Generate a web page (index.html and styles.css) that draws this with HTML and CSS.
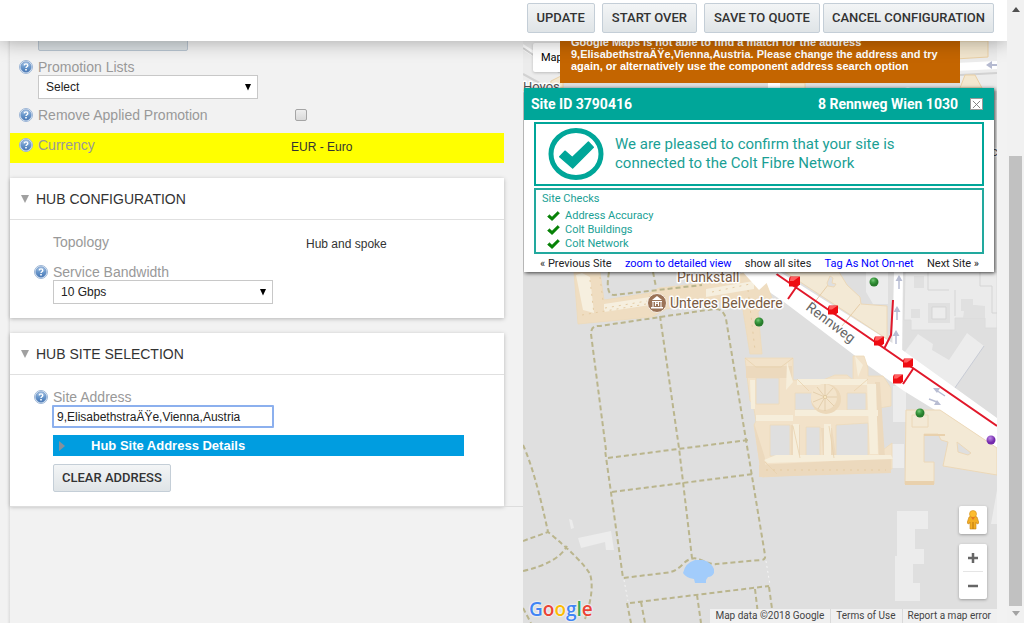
FILE: index.html
```
<!DOCTYPE html>
<html lang="en">
<head>
<meta charset="utf-8">
<title>Configuration</title>
<link rel="stylesheet" href="styles.css">
</head>
<body>
<svg class="defs" aria-hidden="true">
  <defs>
    <linearGradient id="helpFill" x1="0" y1="0" x2="0" y2="1"><stop offset="0" stop-color="#a9c6e6"/><stop offset=".5" stop-color="#6a98cc"/><stop offset="1" stop-color="#4676b4"/></linearGradient>
    <symbol id="help" viewBox="0 0 14 14">
      <circle cx="7" cy="7" r="6.5" fill="#e3edf8" stroke="#9db6d6"/>
      <circle cx="7" cy="7" r="5.2" fill="url(#helpFill)" stroke="#5f88bd" stroke-width=".6"/>
      <path d="M5.200 5.400c.1-2 3.600-2 3.600 0 0 1.300-1.800 1.300-1.800 2.600" fill="none" stroke="#fff" stroke-width="1.400"/>
      <rect x="6.2" y="9" width="1.6" height="1.5" fill="#fff"/>
    </symbol>
    <symbol id="tick" viewBox="0 0 100 80"><path d="M2 45 17 29 38 47 84 3 98 18 39 77Z" fill="currentColor" stroke="currentColor" stroke-width="4" stroke-linejoin="round"/></symbol>
  </defs>
</svg>
<div class="app">
  <div class="page">
    <header class="toolbar">
      <button class="btn spaced">UPDATE</button>
      <button class="btn spaced">START OVER</button>
      <button class="btn">SAVE TO QUOTE</button>
      <button class="btn">CANCEL CONFIGURATION</button>
    </header>
    <main class="content">
      <form class="form">
        <section class="general">
          <button class="btn check" type="button" disabled>CHECK CONNECTIVITY</button>
          <div class="row"><svg class="help"><use href="#help"/></svg><label for="promo">Promotion Lists</label></div>
          <div class="select"><select id="promo"><option>Select</option></select><svg viewBox="0 0 6 7"><path d="M0 0h6L3 6.5z"/></svg></div>
          <div class="row remove"><svg class="help"><use href="#help"/></svg><label for="remove">Remove Applied Promotion</label><input id="remove" type="checkbox"></div>
          <div class="row currency"><svg class="help"><use href="#help"/></svg><span>Currency</span><span class="value">EUR - Euro</span></div>
        </section>
        <section class="card">
          <h2><svg class="fold" viewBox="0 0 8 8"><path d="M0 0h8L4 8z"/></svg>HUB CONFIGURATION</h2>
          <div class="card-body">
            <div class="row topology"><span class="blank"></span><span>Topology</span><span class="value">Hub and spoke</span></div>
            <div class="row"><svg class="help"><use href="#help"/></svg><label for="band">Service Bandwidth</label></div>
            <div class="select"><select id="band"><option>10 Gbps</option></select><svg viewBox="0 0 6 7"><path d="M0 0h6L3 6.5z"/></svg></div>
          </div>
        </section>
        <section class="card">
          <h2><svg class="fold" viewBox="0 0 8 8"><path d="M0 0h8L4 8z"/></svg>HUB SITE SELECTION</h2>
          <div class="card-body">
            <div class="row"><svg class="help"><use href="#help"/></svg><label for="addr">Site Address</label></div>
            <input class="address" id="addr" type="text" value="9,ElisabethstraÄŸe,Vienna,Austria" autofocus>
            <button class="details" type="button"><svg viewBox="0 0 6 10"><path d="M0 0 6 5 0 10z"/></svg>Hub Site Address Details</button>
            <button class="btn clear" type="button">CLEAR ADDRESS</button>
          </div>
        </section>
        <hr>
      </form>
      <section class="map">
        <svg class="canvas" viewBox="523 41 474 582" preserveAspectRatio="xMinYMin slice">
          <defs>
            <radialGradient id="green" cx=".4" cy=".3"><stop offset="0" stop-color="#7cc77c"/><stop offset=".5" stop-color="#3f9f43"/><stop offset="1" stop-color="#287c2c"/></radialGradient>
            <radialGradient id="violet" cx=".4" cy=".3"><stop offset="0" stop-color="#bd8ae6"/><stop offset="1" stop-color="#7429ad"/></radialGradient>
            <symbol id="node" viewBox="0 0 10 9"><path d="M1 0H10V7L8 9H0V2Z" fill="#ee0c12"/><path d="M1.5 .5H9L4 4 .8 4z" fill="#ff6060"/></symbol>
          </defs>
          <path fill="#dfdfdf" d="M523 41h474v582H523z"/>
          <!-- streets and blocks above the info panel -->
          <path fill="#ececec" d="M523 41h37v50h-37zM960 41h37v50h-37zM990 100h7v220h-7z"/>
          <path fill="#fff" d="M523 44 560 67v7L523 50z"/>
          <path stroke="#d2d2d2" stroke-width="2" fill="none" d="M523 48 560 73M523 74 545 86M960 75 997 73"/>
          <path fill="#f3e7cf" stroke="#ead0a5" d="M955 41h33v16l-33 2zM551 81l12-6v13h-13zM775 83h30v6h-30zM965 75h10l7 13h-22z"/>
          <path fill="#fff" d="M955 63 997 61V69L955 71z"/>
          <g stroke="#b5bad0" stroke-width="2" fill="#b5bad0"><path d="M990 65h7"/><path stroke="none" d="M986 65l6-4v8z"/></g>
          <text class="place plain" x="523" y="91">Hoyos</text>
          <text class="place plain" x="904" y="98">St</text>
          <text class="place plain" x="991" y="156">c</text>
          <path fill="#fff" d="M768 41h12v47h-12z"/>

          <!-- blocks east of the avenue -->
          <path fill="#ebebeb" stroke="#dcdcdc" d="M905 272h92v56h-12v-10h-30v12h-44v-10h-7z"/>
          <g fill="#ececec">
            <path d="M901 357 918 334 933 344 932 350 949 360 967 333 984 346 952 392z"/>
            <path d="M866 272h22v32h-15l-7-12z"/>
            <path d="M893 386h13v36h-13zM892 444h12v24h-12zM897 511h31v18h-13v20h9v15h-11v19h7v18h-25v-45h2zM578 538l33-7 3 19h-8l-1-8-24 6zM569 519l3 1 2 8-3 1zM997 490v34h-6z"/>
          </g>
          <path d="M984 346 952 392" stroke="#c8ccd6" fill="none"/>
          <g fill="#e0e0e0"><path d="M928 303h22v20h-22zM911 309h9v9h-9zM961 299h12v12h-12zM914 276h10v12h-10zM965 304l20 2v12h-22z"/></g>
          <path fill="#ececec" stroke="#d5d5d5" d="M932 307h14v12h-14z"/>
          <path fill="none" stroke="#d5d5d5" d="M980 272v14h12v27h5M949 290h-21v-18M955 316v-26"/>

          <!-- roads -->
          <path fill="#fff" d="M894 272h9l-1 92-10-4z"/>
          <path fill="#fff" d="M740 272H780L894 344 997 418V448L904 391 866 364 784 302z"/>

          <!-- palace and street-side buildings -->
          <g fill="#f3e9d5" stroke="#ecd8b8">
            <path d="M785 272h54l8 13 13 12 1 7 26 2v33z"/>
            <path d="M906 410h34l57 38v27l-54-9 5-24-7-2-3-6h-14v28h10v22h-29z"/>
            <path d="M912 415h16v12h-16z"/><path fill="#dfdfdf" d="M957 442l14 11-3 2-10-3z"/>
          </g>
          <path d="M814 303 828 285M842 326l18-22" stroke="#e6cda8" fill="none"/>
          <path d="M827 283l3-7 3 2-1 5 4 1-2 3-6-1z" fill="#dfdfdf" stroke="#ecd8b8"/>
          <path fill="#e9d1ad" d="M905 481h29v4h-29zM924 434h21v2h-21z"/>
          <g fill="#efddc1" stroke="#eddaba" stroke-width=".8">
            <path d="M574 272h26l4 28 45-7 10-5 46-5 34-8 6-3h27l-7 8 7 18-14 14 4 42h-12l-8-50-16-3-60 8-14 8-74 7z"/>
            <path fill="#f6efdf" stroke="none" d="M576 275l6-2 8 4 4 36-11-3zM604 304l46-7v8l-46 7zM706 289l48-8v8l-48 8z"/>
            <path fill="#f2e2c9" fill-rule="evenodd" d="M745 358h48v22h30l12-5h12l6 5V356h11l4 12v8h15l8 12 0 18-12 2 4 42 9-7v26L762 477 754 425l2-4-3-18-3-2zM756 378v26h23V378zM795 393h20v17h-20zM847 393h19v17h-19zM770 425v31h20V425zM806 427v31h14V427zM836 425v31h32V423z"/>
            <path fill="#ecd9bd" stroke="none" d="M754 423l11 35v18h-4zM759 465l132-7v15l-132 4zM791 425h9v32h-9zM875 382l5 0 5 76h-6zM821 428l11 0 4 28h-13zM746 366h46v12h-46z"/>
            <path fill="#f6eedb" stroke="none" d="M756 415h37v6h-37zM797 379h70v6h-70zM795 410h83v6h-83zM764 460l12-5h115l2 4-125 4zM867 384h9l2 70h-8zM793 424h6v33h-6zM824 424h7v32h-7zM750 380h5v29h-4zM787 362l6 20-7 8zM855 356l8 9-5 12z"/>
            <path fill="none" stroke="#e8d2ad" d="M745 358l11 9h25l12-9M765 462l12 12M800 458l-7-32M834 458l-5-32M797 379l12 12M868 379l-14 12"/>
          </g>
          <circle cx="826" cy="399" r="15" fill="#ecd8b9"/><circle cx="824" cy="397" r="13" fill="#f3e4cb"/>
          <path stroke="#dcc5a0" stroke-width=".7" fill="none" d="M825 397l-12-5M825 397l-12 5M825 397l-7 12M825 397l0 14M825 397l9 9M825 397l12 0M825 397l8-9M825 397v-13M825 397l-8-10"/>
          <circle cx="825" cy="397" r="1.500" fill="#fff0cc" stroke="#d4b98d" stroke-width=".6"/>
          <path fill="none" stroke="#e4cba3" stroke-dasharray="2 5" d="M766 470h120M582 315l70-12M605 308l42-7M712 292l38-8M748 290l7 60M590 280l4 34M600 277l3 24"/>

          <!-- garden paths -->
          <g class="paths">
            <path d="M609 272q-4 23 5 23l88-10"/><path d="M653 272 656 287"/>
            <path d="M606 450 591 334q0-9 9-8L714 309q9-1 12 10L765 555q1 5-4 5l-45 4q-4 1-15-4-10-5-19 5-8 8-18 8l-41 5-18-128"/>
            <path d="M660 316 679 448 692 558M608 458 748 440M612 492 753 474"/>
            <path d="M523 445q12 26 25 87 33 27 42 42 5 16-5 45M523 541l25-9M523 571q35-8 44-25M523 608l8 15"/>
            <path d="M630 603 769 586M627 603l4 20M641 602l4 21M697 595l4 28M755 589l4 34M769 587l5 36"/>
          </g>
          <g fill="none" stroke="#f5f5f5" stroke-dasharray="2 3"><path d="M624 580l4 21M766 561l4 24"/></g>
          <path fill="#a2ccfb" d="M683 573q2-10 12-13h8q8 2 11 9 0 2 0 4-2 4-6 4l-2 3v3h-11l-1-4q-8-1-11-6z"/>

          <!-- fibre route -->
          <path fill="none" stroke="#e1182a" stroke-width="2" d="M775 273 997 426M797 286 788 299M893 300 891 335 884 349M913 369 903 384"/>
          <g fill="#b8bdd3" stroke="#b8bdd3" stroke-width="1.500"><path fill="none" d="M899 280v9M897 311v9M896 334v10M936 390l9 6M929 399l8 3"/><path stroke="none" d="M895.500 281l3.500-6 3.500 6zM893.500 312l3.500-6 3.500 6zM892.500 336l3.500-6 3.500 6zM933 388l7 0-3 5zM941 405l-7 0 3-5z"/></g>
          <use href="#node" x="789" y="276" width="11" height="11"/><use href="#node" x="828" y="305" width="10" height="10"/>
          <use href="#node" x="874" y="336" width="10" height="10"/><use href="#node" x="903" y="358" width="10" height="10"/>
          <use href="#node" x="893" y="374" width="10" height="10"/>
          <circle cx="874" cy="282" r="4.500" fill="url(#green)"/><circle cx="759" cy="322" r="4.500" fill="url(#green)"/><circle cx="920" cy="413" r="4.500" fill="url(#green)"/><circle cx="991" cy="440" r="4.500" fill="url(#violet)"/>
          <text class="street" transform="translate(805 309) rotate(37)">Rennweg</text>
          <text class="place" x="677" y="282">Prunkstall</text>
          <circle cx="657" cy="303" r="9.500" fill="#9b7357" stroke="#f7efe5"/>
          <path d="M652 301h10v1h-10zM652 300l5-4 5 4zM651 307h12v1.500h-12z" fill="#fff"/><path d="M653 302v5M661 302v5M655.500 306v-4l1.500 2 1.500-2v4" stroke="#fff" fill="none"/>
          <text class="place" x="670" y="308">Unteres Belvedere</text>
          <path fill="#fff" d="M741 270h40L759 290z"/>
        </svg>
        <button class="maptype" type="button">Map</button>
        <div class="alert" role="alert">Google Maps is not able to find a match for the address<br>9,ElisabethstraÄŸe,Vienna,Austria. Please change the address and try<br>again, or alternatively use the component address search option</div>
        <article class="info">
          <div class="info-head"><strong>Site ID 3790416</strong><strong class="site">8 Rennweg Wien 1030</strong><button class="close" type="button" aria-label="Close"><svg viewBox="0 0 10 10"><path d="M1 1 9 9M9 1 1 9"/></svg></button></div>
          <div class="notice">
            <svg class="badge" viewBox="0 0 56 52"><ellipse cx="28" cy="26" rx="25" ry="23.500" fill="none" stroke="currentColor" stroke-width="5"/><use href="#tick" x="11" y="13" width="35" height="28"/></svg>
            <p>We are pleased to confirm that your site is<br>connected to the Colt Fibre Network</p>
          </div>
          <div class="checks"><h3>Site Checks</h3>
            <ul><li><svg><use href="#tick"/></svg>Address Accuracy</li><li><svg><use href="#tick"/></svg>Colt Buildings</li><li><svg><use href="#tick"/></svg>Colt Network</li></ul>
          </div>
          <nav class="links"><a href="#">« Previous Site</a><a class="blue" href="#">zoom to detailed view</a><a href="#">show all sites</a><a class="blue" href="#">Tag As Not On-net</a><a href="#">Next Site »</a></nav>
        </article>
        <div class="controls">
          <button class="pegman" type="button" aria-label="Street View"><svg viewBox="0 0 12 20"><path d="M2 7q4-3 8 0l2 6-2 1-1-2v7H3v-7l-1 2-2-1z" fill="#f3ae23" stroke="#c98312" stroke-width=".6"/><path d="M6 12v7" stroke="#b8750e"/><circle cx="6" cy="4" r="3.500" fill="#fdbd2e" stroke="#d18d1a" stroke-width=".6"/><path d="M4 7h4L6 10z" fill="#e57a20"/></svg></button>
          <div class="zoom"><button type="button" aria-label="Zoom in"><svg viewBox="0 0 12 12"><path d="M1 6H11M6 1V11"/></svg></button><button type="button" aria-label="Zoom out"><svg viewBox="0 0 12 12"><path d="M1 6H11"/></svg></button></div>
        </div>
        <div class="logo"><span class="b">G</span><span class="r">o</span><span class="y">o</span><span class="b">g</span><span class="g">l</span><span class="r">e</span></div>
        <div class="legal"><span>Map data ©2018 Google</span><a href="#">Terms of Use</a><a href="#">Report a map error</a></div>
      </section>
    </main>
  </div>
  <div class="scroll" aria-hidden="true"><svg viewBox="0 0 8 5"><path d="M0 5 4 0 8 5z" fill="#505050"/></svg><span class="thumb"></span><svg viewBox="0 0 8 5"><path d="M0 0 4 5 8 0z" fill="#a3a3a3"/></svg></div>
</div>
</body>
</html>
```
FILE: styles.css
```
* { box-sizing: border-box; }
body { margin: 0; background: #f2f2f2; color: #333; font: 12px/16px "Liberation Sans", Arial, sans-serif; }
button, input, select { font: inherit; color: inherit; margin: 0; }
button { cursor: pointer; }
svg { display: block; flex: none; }
.defs { position: absolute; width: 0; height: 0; }
.app { display: grid; grid-template-columns: 1fr 17px; height: 100vh; overflow: hidden; }
.page { display: flex; flex-direction: column; min-width: 0; min-height: 0; overflow: hidden; }
.toolbar { display: flex; flex: none; justify-content: flex-end; gap: 3px; padding: 3px 13px 8px; background: #fff; box-shadow: 0 0 20px rgba(0,0,0,.35); position: relative; z-index: 5; }
.spaced { margin-right: 4px; }
.btn { height: 30px; padding: 0 9px; border: 1px solid #c4ced7; border-radius: 2px; background: linear-gradient(#f3f5f6, #dfe4e7); color: #333; font: 500 13px/16px Roboto, sans-serif; white-space: nowrap; }
.toolbar .btn:last-child { padding: 0 8px; }
.content { display: grid; grid-template-columns: 523fr 474fr; flex: 1; min-height: 0; padding-right: 10px; overflow: hidden; }
.form { min-width: 0; overflow: hidden; padding-left: 10px; background: linear-gradient(90deg, #f2f2f2 0, #f2f2f2 7px, #dedede 10px, #f2f2f2 10px); }
.general, .card { margin-right: 19px; }
.check { display: block; width: 150px; height: 28px; margin: -18px 0 8px 28px; padding: 0; background: #d9dfe2; border-color: #b7c3cf; color: #fff; }
.row { display: flex; align-items: center; height: 16px; padding-left: 9px; color: #999; font-size: 14px; }
.help { width: 14px; height: 14px; margin-right: 5px; }
.select { position: relative; width: 220px; margin-left: 28px; }
.select select { display: block; width: 100%; height: 24px; padding: 0 7px; border: 1px solid #c8c8c8; border-radius: 0; background: #fff; color: #222; appearance: none; }
.select svg { position: absolute; right: 7px; top: 9px; width: 6px; height: 7px; }
.remove { margin: 8px 0 10px; }
.remove label { width: 257px; }
.remove input { appearance: none; width: 12px; height: 12px; border: 1px solid #a5a5a5; border-radius: 2px; background: linear-gradient(#eee, #d9d9d9); }
.currency { height: 30px; padding-bottom: 6px; background: #ff0; }
.currency span:nth-child(2), .topology span:nth-child(2) { width: 253px; }
.value { color: #333; font-size: 12px; padding-top: 4px; }
.card { margin-top: 15px; background: #fff; box-shadow: 0 1px 4px rgba(0,0,0,.25); }
.card h2 { display: flex; align-items: center; height: 42px; margin: 0; padding-left: 11px; border-bottom: 1px solid #e0e0e0; font-size: 14px; font-weight: 400; color: #333; }
.fold { width: 8px; height: 8px; margin-right: 7px; fill: #a0a0a0; }
.card-body { padding: 14px 0 14px 15px; }
.blank { width: 19px; }
.topology { margin-bottom: 14px; }
.address { display: block; width: 222px; height: 23px; margin: 0 0 7px 27px; padding: 0 3px; border: 2px solid #8cb0ee; border-radius: 1px; outline: 0; background: #fff; color: #222; }
.details { display: flex; align-items: center; width: calc(100% - 68px); height: 21px; margin: 0 0 8px 28px; padding: 0 6px; border: 0; background: #009de0; color: #fff; font-size: 13px; font-weight: 700; }
.details svg { width: 6px; height: 10px; margin-right: 26px; fill: #87909b; }
.clear { display: block; height: 28px; margin-left: 28px; padding: 0 8px; }
hr { margin: 0; border: 0; border-top: 1px solid #ddd; }
.map { position: relative; overflow: hidden; font-family: Roboto, sans-serif; background: #dfdfdf; }
.canvas { position: absolute; inset: 0; width: 100%; height: 100%; }
.place, .street { font: 14px Roboto, sans-serif; fill: #7a5b42; stroke: #fff; stroke-width: 3px; stroke-linejoin: round; paint-order: stroke; }
.street { fill: #666; stroke: none; }
.place.plain { font-size: 13px; fill: #555; }
.paths { fill: none; stroke: #bab58d; stroke-width: 2px; stroke-dasharray: 5 3; }
.maptype { position: absolute; left: 10px; top: 2px; height: 29px; padding: 0 8px; border: 0; border-radius: 2px; background: #fff; color: #000; font-size: 11px; box-shadow: 0 1px 3px rgba(0,0,0,.2); }
.alert { position: absolute; left: 37px; right: 37px; top: -10px; padding: 5px 11px 11px; background: #c46500; color: #fff; font: bold 11px/12px "Liberation Sans", Arial, sans-serif; white-space: nowrap; }
.info { position: absolute; left: 1px; right: 3px; top: 47px; background: #fff; box-shadow: 1px 1px 4px rgba(0,0,0,.75); color: #1a9f95; }
.info-head { display: flex; align-items: center; height: 32px; padding: 0 11px 0 7px; background: #00a699; color: #fff; font-size: 14px; }
.site { margin-left: auto; }
.close { display: grid; place-items: center; width: 13px; height: 12px; margin-left: 12px; padding: 0; border: 1px solid #999; background: #fff; }
.close svg { width: 9px; height: 9px; fill: none; stroke: #777; }
.notice { display: flex; align-items: center; gap: 11px; height: 64px; margin: 2px 10px; padding: 0 12px; border: 2px solid #00a699; }
.badge { width: 56px; height: 52px; color: #00a699; }
.notice p { margin: 0; font-size: 15px; line-height: 19px; white-space: nowrap; }
.checks { margin: 0 10px; padding: 2px 6px 0; height: 66px; border: 2px solid #22a99e; font-size: 11px; line-height: 14px; }
.checks h3 { margin: 0 0 3px; font-size: 11px; line-height: 14px; font-weight: 400; }
.checks ul { margin: 0; padding: 0 0 0 5px; list-style: none; }
.checks li { display: flex; align-items: center; gap: 5px; }
.checks li svg { width: 13px; height: 10px; color: #078207; }
.links { display: flex; justify-content: space-between; padding: 2px 15px 0 16px; font-size: 11px; white-space: nowrap; }
.links a { color: #222; text-decoration: none; }
.links .blue { color: #00f; }
.controls { position: absolute; right: 10px; bottom: 24px; display: grid; gap: 10px; width: 28px; }
.pegman, .zoom { border: 0; border-radius: 2px; background: #fff; box-shadow: 0 1px 3px rgba(0,0,0,.3); }
.pegman { display: grid; place-items: center; height: 28px; padding: 0; }
.pegman svg { width: 12px; height: 20px; }
.zoom button { display: grid; place-items: center; width: 20px; height: 27px; margin: 0 4px; padding: 0; border: 0; background: none; }
.zoom button + button { height: 28px; border-top: 1px solid #e5e5e5; }
.zoom svg { width: 12px; height: 12px; stroke: #666; stroke-width: 2.5px; }
.logo { position: absolute; left: 6px; bottom: 2px; font: 600 19px/24px "Open Sans", sans-serif; text-shadow: 0 0 2px #fff, 0 0 2px #fff; }
.b { color: #4285f4; } .r { color: #ea4335; } .y { color: #fbbc05; } .g { color: #34a853; }
.legal { position: absolute; right: 0; bottom: 0; display: flex; height: 14px; background: #f0f0f0; font-size: 10px; line-height: 14px; white-space: nowrap; }
.legal > * { padding: 0 6px 0 5px; color: #444; text-decoration: none; }
.legal a { border-left: 1px solid #dadada; }
.scroll { display: flex; flex-direction: column; align-items: center; justify-content: space-between; padding: 7px 0; background: #f1f1f1; }
.scroll svg { width: 8px; height: 5px; }
.thumb { flex: 1; width: 13px; margin: 144px 0 5px; background: #c1c1c1; }
```
